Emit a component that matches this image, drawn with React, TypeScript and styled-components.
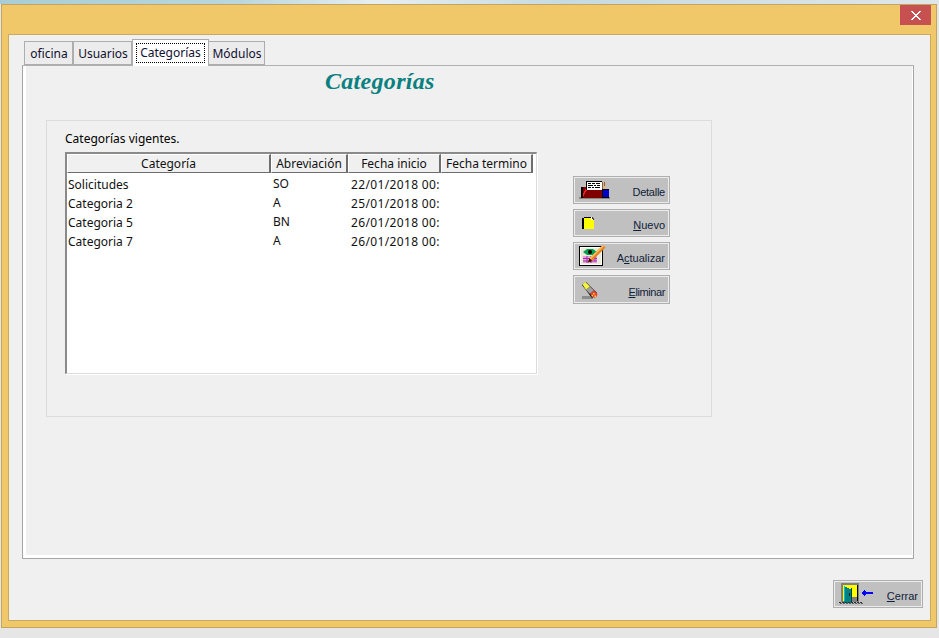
import React from "react";
import styled, { createGlobalStyle } from "styled-components";

const GlobalStyle = createGlobalStyle`
  html, body {
    margin: 0;
    padding: 0;
    overflow: hidden;
    background: #e6e6e6;
  }
`;

const Desktop = styled.div`
  width: 939px;
  height: 638px;
  box-sizing: border-box;
  padding: 4px 2px 10px 1px;
  background:
    linear-gradient(90deg, #a9cdd6 0%, #b9d6dc 25%, #e6eef0 40%, #c6dadf 60%, #dfe6e8 100%) top / 100% 4px no-repeat,
    #e6e6e6;
  font-family: "Noto Sans", "Liberation Sans", Arial, sans-serif;
  font-size: 12px;
  color: #000;
`;

const Window = styled.div`
  height: 100%;
  box-sizing: border-box;
  display: flex;
  flex-direction: column;
  background: #f0c869;
  border: 1px solid #c4a55e;
`;

const TitleBar = styled.div`
  height: 29px;
  flex: none;
  display: flex;
  justify-content: flex-end;
  padding-right: 5px;
`;

const CloseButton = styled.div`
  width: 31px;
  height: 20px;
  background: #c75050;
  display: flex;
  align-items: center;
  justify-content: center;
`;

const ClientArea = styled.div`
  flex: 1;
  min-height: 0;
  margin: 0 5px 6px 6px;
  background: #f0f0f0;
  border: 1px solid #c9aa5e;
  padding: 5px 17px 0 13px;
  display: flex;
  flex-direction: column;
`;

const TabStrip = styled.div`
  height: 26px;
  flex: none;
  display: flex;
  align-items: flex-end;
  padding-left: 2px;
  position: relative;
  z-index: 1;
  margin-bottom: -1px;
`;

const Tab = styled.div<{ $active?: boolean; $width: number }>`
  width: ${(p) => p.$width}px;
  box-sizing: border-box;
  height: ${(p) => (p.$active ? 27 : 24)}px;
  margin-bottom: ${(p) => (p.$active ? 0 : 1)}px;
  margin-right: ${(p) => (p.$active ? -1 : 0)}px;
  background: ${(p) => (p.$active ? "#fff" : "#ececec")};
  border: 1px solid #adadad;
  border-bottom: ${(p) => (p.$active ? "none" : "1px solid #adadad")};
  display: flex;
  align-items: ${(p) => (p.$active ? "flex-start" : "center")};
  justify-content: center;
  padding: ${(p) => (p.$active ? "3px 3px 0" : "1px 0 0 1px")};
  white-space: nowrap;
  color: #101030;
`;

const FocusLabel = styled.span`
  display: flex;
  align-items: center;
  justify-content: center;
  width: 100%;
  height: 20px;
  padding-bottom: 1px;
  box-sizing: border-box;
  outline: 1px dotted #000;
  outline-offset: -1px;
`;

const TabPanel = styled.div`
  width: 892px;
  height: 494px;
  box-sizing: border-box;
  flex: none;
  background: #f0f0f0;
  border: 1px solid #a6a6a6;
  border-top-color: #b0b0b0;
  box-shadow: inset 3px 0 0 #fff, inset 0 -3px 0 #fff, inset -1px 0 0 #fff;
  padding-top: 2px;
`;

const Title = styled.h1`
  margin: 0 0 0 302px;
  height: 27px;
  font: italic bold 24px/27px "Liberation Serif", "Times New Roman", serif;
  letter-spacing: 0.3px;
  color: #0b8080;
  white-space: nowrap;
`;

const GroupBox = styled.div`
  width: 666px;
  height: 297px;
  box-sizing: border-box;
  margin: 25px 0 0 23px;
  border: 1px solid #dcdcdc;
  padding: 10px 0 0 18px;
`;

const GroupLabel = styled.div`
  height: 21px;
  line-height: 15px;
`;

const GroupRow = styled.div`
  display: flex;
  align-items: flex-start;
  gap: 36px;
`;

const ListView = styled.div`
  width: 472px;
  height: 222px;
  box-sizing: border-box;
  flex: none;
  background: #fff;
  border-top: 2px solid #8a8a8a;
  border-left: 2px solid #8a8a8a;
  border-right: 1px solid #dcdcdc;
  border-bottom: 1px solid #dcdcdc;
  box-shadow: 1px 1px 0 #fff;
  display: flex;
  flex-direction: column;
`;

const COLUMNS = "204px 77px 93px 92px";

const HeaderRow = styled.div`
  display: grid;
  grid-template-columns: ${COLUMNS};
  height: 17px;
  flex: none;
`;

const HeaderCell = styled.div`
  box-sizing: border-box;
  background: #f0f0f0;
  border-top: 1px solid #fff;
  border-left: 1px solid #fff;
  border-right: 2px solid #6d6d6d;
  border-bottom: 1px solid #6d6d6d;
  display: flex;
  align-items: center;
  justify-content: center;
  white-space: nowrap;
  color: #111;
`;

const Rows = styled.div`
  padding-top: 4px;
`;

const Row = styled.div`
  display: grid;
  grid-template-columns: ${COLUMNS};
  height: 19px;
  line-height: 19px;
`;

const Cell = styled.div<{ $offset?: number; $shift?: number; $spacing?: number }>`
  padding-left: ${(p) => p.$offset ?? 1}px;
  position: relative;
  top: ${(p) => p.$shift ?? 0}px;
  letter-spacing: ${(p) => p.$spacing ?? 0}px;
  white-space: nowrap;
  overflow: hidden;
  color: #111;
`;

const ButtonColumn = styled.div`
  display: flex;
  flex-direction: column;
  gap: 5px;
  padding-top: 24px;
`;

const ActionButton = styled.div<{ $width?: number; $height?: number }>`
  width: ${(p) => p.$width ?? 97}px;
  height: ${(p) => p.$height ?? 28}px;
  box-sizing: border-box;
  border: 1px solid #aeaeae;
  outline: 1px solid #ececec;
  outline-offset: -2px;
  background: #c0c0c0;
  padding: 0 4px 0 5px;
  display: flex;
  align-items: center;
  justify-content: space-between;
  font-family: "Liberation Sans", Arial, sans-serif;
  font-size: 11px;
  color: #10203a;
  svg {
    display: block;
    flex: none;
  }
`;

const ButtonLabel = styled.span<{ $spacing?: number }>`
  align-self: flex-end;
  padding-bottom: 4px;
  line-height: 13px;
  letter-spacing: ${(p) => p.$spacing ?? 0}px;
`;

const Footer = styled.div`
  flex: 1;
  display: flex;
  justify-content: flex-end;
  padding: 21px 0 0 0;
  margin-right: -10px;
`;

const DetalleIcon = () => (
  <svg width="31" height="18" viewBox="0 0 31 18" shapeRendering="crispEdges">
    <rect x="0" y="16" width="31" height="2" fill="#8a8a7a" />
    <rect x="2" y="6" width="22" height="11" fill="#800000" />
    <path d="M2 6h2v11H2z" fill="#000" />
    <path d="M4 13l3-6h2l-5 9z" fill="#ff2020" />
    <rect x="7" y="0" width="16" height="9" fill="#fff" />
    <path d="M7 0h16v1H7zM7 0h1v9H7z" fill="#000" />
    <path d="M9 2h3v1H9zM13 2h3v1h-3zM17 2h4v1h-4zM9 4h5v1H9zM15 4h2v1h-2zM18 4h3v1h-3zM9 6h3v1H9zM13 6h2v1h-2zM16 6h5v1h-5z" fill="#000" />
    <rect x="23" y="1" width="4" height="7" fill="#d8b890" />
    <path d="M23 1h1v7h-1zM25 1h1v4h-1z" fill="#806040" />
    <rect x="23" y="9" width="7" height="8" fill="#0000c8" />
    <path d="M23 8h7v1h-7zM23 9h1v8h-1zM24 16h6v1h-6z" fill="#000" />
  </svg>
);

const NuevoIcon = () => (
  <svg width="31" height="18" viewBox="0 0 31 18" shapeRendering="crispEdges">
    <rect x="3" y="4" width="12" height="11" fill="#ffff00" />
    <rect x="3" y="4" width="2" height="11" fill="#000" />
    <path d="M5 3h7v1H5z" fill="#000" />
    <path d="M12 3h1v1h1v1h1v1h-3z" fill="#fff" />
    <path d="M13 3h1v1h1v2h-1v-1h-1z" fill="#404040" />
  </svg>
);

const ActualizarIcon = () => (
  <svg width="31" height="22" viewBox="0 0 31 22">
    <rect x="0.500" y="1.500" width="23" height="19" fill="#fff" stroke="#000" />
    <rect x="2" y="3" width="20" height="16" fill="#e8ecd8" />
    <path d="M4 7l4-3h6l4 3-4 3H8z" fill="#00a050" />
    <circle cx="11" cy="7" r="2" fill="#000" />
    <rect x="4" y="11" width="14" height="7" fill="#e8a0e8" />
    <path d="M4 13.500h14M4 16h14M8 11v7M12 11v7M16 11v5" stroke="#a030a0" strokeWidth="1" />
    <path d="M24 0l2.500 2.500L13 16l-4 1.500L10.500 13z" fill="#e88020" />
    <path d="M24 0l1 1L11.500 14.500 10.500 13z" fill="#f8c060" />
    <path d="M10.500 13L13 16l-4 1.500z" fill="#300000" />
  </svg>
);

const EliminarIcon = () => (
  <svg width="31" height="18" viewBox="0 0 31 18">
    <path d="M3 15h11v3H3z" fill="#8c8c8c" />
    <path d="M3 4l4-3 11 11-5 5z" fill="#000" />
    <path d="M3.500 3.500L6.500 1l4.500 4.500L7 9z" fill="#f4f440" />
    <path d="M7 9l4-3.500 4 4L11 13z" fill="#a0a0a0" />
    <path d="M11 13l4-3.500 3.500 3.500-1 3-2.500 1z" fill="#f04030" />
    <path d="M14 12h1.500v1.500H14zM12.500 14H14v1.500h-1.500zM15.500 14.500H17V16h-1.500z" fill="#f0e040" />
  </svg>
);

const CerrarIcon = () => (
  <svg width="35" height="22" viewBox="0 0 35 22" shapeRendering="crispEdges">
    <rect x="2" y="0" width="18" height="19" fill="#808080" />
    <rect x="4" y="2" width="14" height="16" fill="#ffff00" />
    <rect x="18" y="2" width="1" height="16" fill="#000" />
    <path d="M5 3h1v1h2v1h2v1h2v14H5z" fill="#008080" />
    <rect x="5" y="3" width="1" height="15" fill="#00c0c0" />
    <rect x="10" y="10" width="1" height="3" fill="#002020" />
    <rect x="12" y="5" width="1" height="14" fill="#004040" />
    <rect x="13" y="14" width="5" height="4" fill="#808080" />
    <path d="M0 19h2v1H0zM3 19h2v1H3zM6 19h2v1H6zM9 19h2v1H9zM12 19h2v1h-2zM15 19h2v1h-2zM18 19h2v1h-2zM21 19h2v1h-2z" fill="#303030" />
    <path d="M1 20h2v1H1zM4 20h2v1H4zM7 20h2v1H7zM10 20h2v1h-2zM13 20h2v1h-2zM16 20h2v1h-2zM19 20h2v1h-2zM22 20h2v1h-2z" fill="#606060" />
    <path d="M23 9h1V8h1V7h1v1h1v1h7v2h-7v1h-1v1h-1v-1h-1v-1h-1z" fill="#0000ff" />
  </svg>
);

const rows = [
  { name: "Solicitudes", abbr: "SO", date: "22/01/2018 00:" },
  { name: "Categoria 2", abbr: "A", date: "25/01/2018 00:" },
  { name: "Categoria 5", abbr: "BN", date: "26/01/2018 00:" },
  { name: "Categoria 7", abbr: "A", date: "26/01/2018 00:" },
];

export default function App() {
  return (
    <Desktop>
      <GlobalStyle />
      <Window>
        <TitleBar>
          <CloseButton>
            <svg width="10" height="9" viewBox="0 0 10 9" shapeRendering="crispEdges">
              <path d="M0 0h2v1h1v1h1v1h2V2h1V1h1V0h2v1H9v1H8v1H7v1H6v1h1v1h1v1h1v1h1v1H8V8H7V7H6V6H4v1H3v1H2v1H0V8h1V7h1V6h1V5h1V4H3V3H2V2H1V1H0z" fill="#fff" />
            </svg>
          </CloseButton>
        </TitleBar>
        <ClientArea>
          <TabStrip>
            <Tab $width={49}>oficina</Tab>
            <Tab $width={59}>Usuarios</Tab>
            <Tab $width={77} $active>
              <FocusLabel>Categorías</FocusLabel>
            </Tab>
            <Tab $width={57}>Módulos</Tab>
          </TabStrip>
          <TabPanel>
            <Title>Categorías</Title>
            <GroupBox>
              <GroupLabel>Categorías vigentes.</GroupLabel>
              <GroupRow>
                <ListView>
                  <HeaderRow>
                    <HeaderCell>Categoría</HeaderCell>
                    <HeaderCell>Abreviación</HeaderCell>
                    <HeaderCell>Fecha inicio</HeaderCell>
                    <HeaderCell>Fecha termino</HeaderCell>
                  </HeaderRow>
                  <Rows>
                    {rows.map((row) => (
                      <Row key={row.name}>
                        <Cell>{row.name}</Cell>
                        <Cell $offset={2} $shift={-1}>{row.abbr}</Cell>
                        <Cell $offset={3} $spacing={0.35}>{row.date}</Cell>
                        <Cell />
                      </Row>
                    ))}
                  </Rows>
                </ListView>
                <ButtonColumn>
                  <ActionButton>
                    <DetalleIcon />
                    <ButtonLabel $spacing={-0.25}>Detalle</ButtonLabel>
                  </ActionButton>
                  <ActionButton>
                    <NuevoIcon />
                    <ButtonLabel><u>N</u>uevo</ButtonLabel>
                  </ActionButton>
                  <ActionButton>
                    <ActualizarIcon />
                    <ButtonLabel>A<u>c</u>tualizar</ButtonLabel>
                  </ActionButton>
                  <ActionButton $height={29}>
                    <EliminarIcon />
                    <ButtonLabel $spacing={-0.4}><u>E</u>liminar</ButtonLabel>
                  </ActionButton>
                </ButtonColumn>
              </GroupRow>
            </GroupBox>
          </TabPanel>
          <Footer>
            <ActionButton $width={90}>
              <CerrarIcon />
              <ButtonLabel><u>C</u>errar</ButtonLabel>
            </ActionButton>
          </Footer>
        </ClientArea>
      </Window>
    </Desktop>
  );
}
